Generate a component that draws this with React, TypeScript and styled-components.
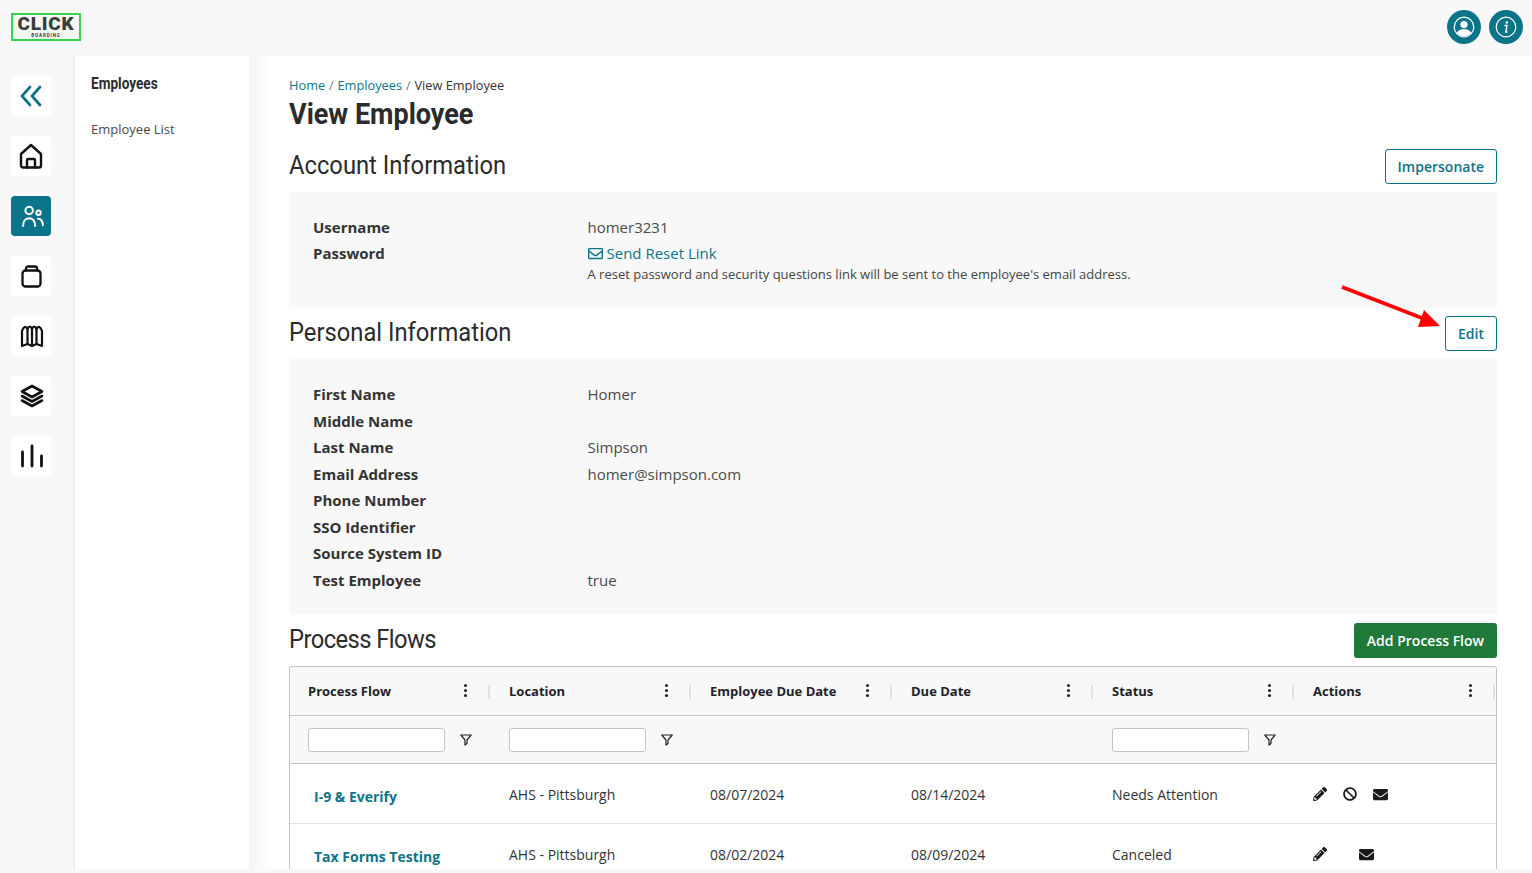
import React from 'react';
import styled, { createGlobalStyle } from 'styled-components';
import { FaPencilAlt, FaBan, FaEnvelope, FaRegEnvelope } from 'react-icons/fa';

const Global = createGlobalStyle`
  html, body { margin: 0; padding: 0; height: 100%; overflow: hidden; background: #f8f8f8; }
  body { font-family: "Open Sans", sans-serif; color: #333; }
  * { box-sizing: border-box; }
`;
const HEAD = `"Roboto", "Liberation Sans", sans-serif`;
const TEAL = '#0c7489';

const Page = styled.div`
  width: 1532px; height: 873px; display: flex; flex-direction: column; background: #f8f8f8; overflow: hidden;
`;
const Header = styled.header`
  height: 56px; flex: none; display: flex; align-items: center; justify-content: space-between;
  padding: 0 9px 2px 11px;
`;
const Logo = styled.div`
  width: 70px; height: 28px; border: 2px solid #35d34f; display: flex; flex-direction: column;
  align-items: center; justify-content: center; background: #f4f6f2; line-height: 1;
`;
const LogoMain = styled.span`
  font: 900 19px/15px "Roboto", sans-serif; color: #3a3d3d; letter-spacing: 0.8px;
`;
const LogoSub = styled.span`
  font: 700 4.5px/5px "Roboto", sans-serif; color: #3a3d3d; letter-spacing: 0.9px; margin-top: 2px;
`;
const HeaderIcons = styled.div`display: flex; gap: 8px;`;
const RoundBtn = styled.div`
  width: 34px; height: 34px; border-radius: 50%; background: ${TEAL}; display: flex; align-items: center; justify-content: center;
`;
const Body = styled.div`flex: 1; display: flex; min-height: 0; margin-bottom: 4px;`;
const Rail = styled.nav`
  width: 73px; flex: none; padding: 20px 0 0 11px; display: flex; flex-direction: column; gap: 20px;
`;
const RailBtn = styled.div<{ $active?: boolean }>`
  width: 40px; height: 40px; border-radius: 4px; display: flex; align-items: center; justify-content: center;
  background: ${p => (p.$active ? TEAL : '#fff')}; color: ${p => (p.$active ? '#fff' : '#111')};
`;
const SubNav = styled.aside`
  width: 176px; flex: none; background: #fff; border-left: 2px solid #efefef; padding: 18px 16px;
`;
const SubTitle = styled.div`
  font: 700 16px/20px ${HEAD}; color: #2b2b2b; transform: scaleX(0.85); transform-origin: left center;
`;
const SubLink = styled.div`
  font-size: 13px; line-height: 18px; margin-top: 26px; color: #4a4a4a;
`;
const Main = styled.main`
  flex: 1; background: linear-gradient(90deg, #f5f5f5 0, #fff 24px); padding: 20px 35px 0 40px; min-width: 0; overflow: hidden;
`;
const Crumbs = styled.div`font-size: 12.8px; line-height: 18px; color: #333;`;
const Crumb = styled.a`color: ${TEAL};`;
const Sep = styled.span`color: #777; margin: 0 3.8px;`;
const Title = styled.h1`
  font: 700 30px/38px ${HEAD}; margin: 1px 0 0; color: #2b2b2b; transform: scaleX(0.9); transform-origin: left center;
`;
const SectionHead = styled.div<{ $mt: number }>`
  display: flex; justify-content: space-between; align-items: center; margin: ${p => p.$mt}px 0 8px; height: 35px;
`;
const SectionTitle = styled.h2<{ $track?: number }>`
  font: 400 25px/32px ${HEAD}; margin: 0 0 1px; color: #2b2b2b; transform: scaleX(0.95); transform-origin: left center;
  letter-spacing: ${p => p.$track ?? 0}px;
`;
const OutlineBtn = styled.button`
  height: 35px; padding: 0 12px; background: #fff; border: 1px solid ${TEAL}; border-radius: 3px; color: ${TEAL};
  font: 600 14px "Open Sans", sans-serif;
`;
const GreenBtn = styled.button`
  height: 35px; padding: 0 13px; background: #1f7a3a; border: 0; border-radius: 3px; color: #fff;
  font: 600 14px "Open Sans", sans-serif;
`;
const Panel = styled.section<{ $pt: number; $pb: number }>`
  background: #f8f8f8; padding: ${p => p.$pt}px 24px ${p => p.$pb}px;
`;
const Row = styled.div`
  display: grid; grid-template-columns: 274.5px 1fr; min-height: 26.5px; font-size: 15px; line-height: 26.5px; color: #4a4a4a;
`;
const Label = styled.div`font-weight: 700; color: #333;`;
const ResetLink = styled.a`
  color: ${TEAL}; display: inline-flex; align-items: center; gap: 4px;
`;
const Hint = styled.div`font-size: 13px; line-height: 16px; margin-top: -2px; color: #444;`;
const Grid = styled.div`
  border: 1px solid #c3c5cb; border-radius: 3px 3px 0 0; border-bottom: 0; height: 300px; overflow: hidden; background: #fff;
`;
const Cols = styled.div<{ $h: number; $bg?: string; $line?: string }>`
  display: grid; grid-template-columns: repeat(6, 201px); height: ${p => p.$h}px; align-items: center;
  background: ${p => p.$bg ?? '#fff'}; border-bottom: 1px solid ${p => p.$line ?? '#c3c5cb'};
`;
const HeadCell = styled.div`
  height: 100%; display: flex; align-items: center; justify-content: space-between; padding: 0 0 0 18px; position: relative;
  font: 700 13px "Open Sans", sans-serif; color: #1e2328;
`;
const Kebab = styled.span`
  display: flex; flex-direction: column; gap: 2px; margin-right: 24px;
  i { width: 3px; height: 3px; border-radius: 50%; background: #1e2328; display: block; }
`;
const Divider = styled.span`
  position: absolute; right: 1px; top: 18px; height: 14px; width: 2px; background: #dde2eb;
`;
const FilterCell = styled.div`
  display: flex; align-items: center; padding: 1px 0 0 18px; gap: 15px;
`;
const FilterInput = styled.input`
  width: 137px; height: 24px; border: 1px solid #c3c5cb; border-radius: 3px; background: #fff;
`;
const Cell = styled.div`
  padding-left: 18px; font-size: 14px; color: #333; margin-top: 2px;
`;
const NameCell = styled.a`
  padding-left: 24px; font-size: 14px; font-weight: 700; color: ${TEAL}; margin-top: 6px;
`;
const Actions = styled.div`
  padding-left: 18px; display: flex; align-items: center; margin-top: 2px; color: #1a1a1a;
`;
const ActionSlot = styled.span<{ $wide?: boolean }>`
  width: ${p => (p.$wide ? 46 : 30)}px; height: 16px; display: flex; align-items: center;
`;
const Arrow = styled.svg`position: absolute; left: 1335px; top: 280px; pointer-events: none;`;

const FilterIcon = () => (
  <svg width="12" height="12" viewBox="0 0 12 12" fill="none" stroke="#1e2328" strokeWidth="1.2"><path d="M.8 1h10.400L7 6v3.500L5 11V6z" strokeLinejoin="round" /></svg>
);
const HomeIcon = () => (
  <svg width="24" height="26" viewBox="0 0 24 26" fill="none" stroke="currentColor" strokeWidth="2.400" strokeLinejoin="round" strokeLinecap="round">
    <path d="M2 11 12 2l10 9v11.500a2 2 0 0 1-2 2H4a2 2 0 0 1-2-2z" /><path d="M8 24.500V17a1 1 0 0 1 1-1h6a1 1 0 0 1 1 1v7.500" />
  </svg>
);
const UsersIcon = () => (
  <svg width="22" height="22" viewBox="0 0 20 20" fill="none" stroke="currentColor" strokeWidth="1.800" strokeLinecap="round" style={{ marginLeft: 3 }}>
    <circle cx="6.500" cy="5" r="3.400" /><circle cx="15" cy="7" r="2" /><path d="M1 19c0-4.500 2.500-7 5.500-7s5.500 2.500 5.500 7M14.500 12.500c2.500-.3 4.500 2 4.500 6" />
  </svg>
);
const BagIcon = () => (
  <svg width="21" height="23" viewBox="0 0 21 23" fill="none" stroke="currentColor" strokeWidth="2.300" strokeLinejoin="round" strokeLinecap="round">
    <rect x="1.500" y="5.500" width="18" height="16" rx="3" /><path d="M5 5.500V3.500a2 2 0 0 1 2-2h7a2 2 0 0 1 2 2v2" />
  </svg>
);
const MapIcon = () => (
  <svg width="24" height="24" viewBox="0 0 24 24" fill="none" stroke="currentColor" strokeWidth="2.200" strokeLinejoin="round" strokeLinecap="round" style={{ marginLeft: 1 }}>
    <path d="M2 22V7Q4.500 0 7.500 5 9.800 0 12 5 14.200 0 16.500 5 19.500 0 22 7v15l-5.500-2L12 22l-4.500-2z" /><path d="M7.500 5v15M12 5v17M16.500 5v15" />
  </svg>
);
const LayersIcon = () => (
  <svg width="24" height="24" viewBox="0 0 24 24" fill="none" stroke="currentColor" strokeWidth="2.600" strokeLinejoin="round" strokeLinecap="round" style={{ marginLeft: 1 }}>
    <path d="M12 2l10 5.500L12 13 2 7.500zM2 12l10 5.500L22 12M2 16.500 12 22l10-5.500" />
  </svg>
);
const BarsIcon = () => (
  <svg width="24" height="24" viewBox="0 0 24 24" stroke="currentColor" strokeWidth="2.800" strokeLinecap="round" style={{ marginLeft: 1 }}><path d="M2.500 22V8M12 22V2M21.500 22V12" /></svg>
);
const ChevronsIcon = () => (
  <svg width="22" height="22" viewBox="0 0 22 22" fill="none" stroke={TEAL} strokeWidth="2.700" strokeLinecap="round"><path d="M10 2 2 11l8 9M20 2l-8 9 8 9" /></svg>
);
const UserIcon = () => (
  <svg width="22" height="22" viewBox="0 0 22 22" fill="none"><circle cx="11" cy="11" r="9.800" stroke="#fff" strokeWidth="1.200" /><circle cx="11" cy="8.500" r="3.600" fill="#fff" /><path d="M3.800 17c1.400-3 4-4 7.200-4s5.800 1 7.200 4a9.800 9.800 0 0 1-14.400 0z" fill="#fff" /></svg>
);
const InfoIcon = () => (
  <svg width="22" height="22" viewBox="0 0 22 22" fill="none"><circle cx="11" cy="11" r="9.800" stroke="#fff" strokeWidth="1.200" /><circle cx="11.800" cy="6.500" r="1.200" fill="#fff" /><path d="M9.500 9.500h2.500l-1.200 6.500h1.700" stroke="#fff" strokeWidth="1.400" fill="none" /></svg>
);

const personal: [string, string][] = [
  ['First Name', 'Homer'], ['Middle Name', ''], ['Last Name', 'Simpson'], ['Email Address', 'homer@simpson.com'],
  ['Phone Number', ''], ['SSO Identifier', ''], ['Source System ID', ''], ['Test Employee', 'true'],
];
const columns = ['Process Flow', 'Location', 'Employee Due Date', 'Due Date', 'Status', 'Actions'];
const rows = [
  { name: 'I-9 & Everify', due1: '08/07/2024', due2: '08/14/2024', status: 'Needs Attention', ban: true },
  { name: 'Tax Forms Testing', due1: '08/02/2024', due2: '08/09/2024', status: 'Canceled', ban: false },
];

export default function App() {
  return (
    <Page>
      <Global />
      <Header>
        <Logo><LogoMain>CLICK</LogoMain><LogoSub>BOARDING</LogoSub></Logo>
        <HeaderIcons>
          <RoundBtn><UserIcon /></RoundBtn>
          <RoundBtn><InfoIcon /></RoundBtn>
        </HeaderIcons>
      </Header>
      <Body>
        <Rail>
          <RailBtn><ChevronsIcon /></RailBtn>
          <RailBtn><HomeIcon /></RailBtn>
          <RailBtn $active><UsersIcon /></RailBtn>
          <RailBtn><BagIcon /></RailBtn>
          <RailBtn><MapIcon /></RailBtn>
          <RailBtn><LayersIcon /></RailBtn>
          <RailBtn><BarsIcon /></RailBtn>
        </Rail>
        <SubNav>
          <SubTitle>Employees</SubTitle>
          <SubLink>Employee List</SubLink>
        </SubNav>
        <Main>
          <Crumbs><Crumb>Home</Crumb><Sep>/</Sep><Crumb>Employees</Crumb><Sep>/</Sep>View Employee</Crumbs>
          <Title>View Employee</Title>
          <SectionHead $mt={16}>
            <SectionTitle>Account Information</SectionTitle>
            <OutlineBtn>Impersonate</OutlineBtn>
          </SectionHead>
          <Panel $pt={21.6} $pb={25.4}>
            <Row><Label>Username</Label><div>homer3231</div></Row>
            <Row>
              <Label>Password</Label>
              <div>
                <ResetLink><FaRegEnvelope size={15} />Send Reset Link</ResetLink>
                <Hint>A reset password and security questions link will be sent to the employee's email address.</Hint>
              </div>
            </Row>
          </Panel>
          <SectionHead $mt={8}>
            <SectionTitle>Personal Information</SectionTitle>
            <OutlineBtn>Edit</OutlineBtn>
          </SectionHead>
          <Panel $pt={22.6} $pb={21.4}>
            {personal.map(([k, v]) => (
              <Row key={k}><Label>{k}</Label><div>{v}</div></Row>
            ))}
          </Panel>
          <SectionHead $mt={8}>
            <SectionTitle $track={-0.6}>Process Flows</SectionTitle>
            <GreenBtn>Add Process Flow</GreenBtn>
          </SectionHead>
          <Grid>
            <Cols $h={49} $bg="#f8f8f8">
              {columns.map(c => (
                <HeadCell key={c}>{c}<Kebab><i /><i /><i /></Kebab><Divider /></HeadCell>
              ))}
            </Cols>
            <Cols $h={48} $bg="#f8f8f8">
              {[0, 1, 2, 3, 4, 5].map(i => (
                <FilterCell key={i}>
                  {(i === 0 || i === 1 || i === 4) && <><FilterInput aria-label="filter" /><FilterIcon /></>}
                </FilterCell>
              ))}
            </Cols>
            {rows.map(r => (
              <Cols key={r.name} $h={60} $line="#e2e4e8">
                <NameCell>{r.name}</NameCell>
                <Cell>AHS - Pittsburgh</Cell>
                <Cell>{r.due1}</Cell>
                <Cell>{r.due2}</Cell>
                <Cell>{r.status}</Cell>
                <Actions>
                  <ActionSlot $wide={!r.ban}><FaPencilAlt size={14} /></ActionSlot>
                  {r.ban && <ActionSlot><FaBan size={14} /></ActionSlot>}
                  <ActionSlot><FaEnvelope size={15} /></ActionSlot>
                </Actions>
              </Cols>
            ))}
          </Grid>
        </Main>
      </Body>
      <Arrow width="110" height="50" viewBox="0 0 110 50">
        <path d="M7 7 92 40" stroke="#ff0000" strokeWidth="3.600" fill="none" />
        <path d="M89 30 L105 46 L83 47 Z" fill="#ff0000" />
      </Arrow>
    </Page>
  );
}
